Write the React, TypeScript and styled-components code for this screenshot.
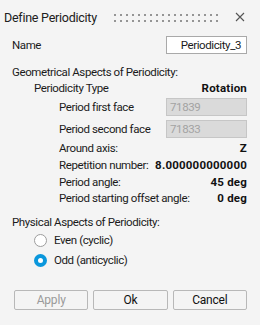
import React from 'react';
import styled, { createGlobalStyle } from 'styled-components';

const GlobalStyle = createGlobalStyle`
  html, body {
    margin: 0;
    padding: 0;
    background: #f4f4f4;
  }
`;

const Dialog = styled.div`
  width: 260px;
  height: 325px;
  background: #f4f4f4;
  font-family: Roboto, "Liberation Sans", Arial, sans-serif;
  font-size: 11.5px;
  letter-spacing: -0.4px;
  color: #1b1b1b;
  display: flex;
  flex-direction: column;
  padding: 0 13px 0 12px;
  box-sizing: border-box;
  overflow: hidden;
`;

const TitleBar = styled.div`
  height: 34px;
  margin-left: -8px;
  display: flex;
  align-items: center;
  gap: 15px;
`;

const Title = styled.div`
  font-size: 12.5px;
  letter-spacing: -0.25px;
  color: #202020;
  white-space: nowrap;
`;

const Grip = styled.div`
  flex: 1;
  height: 9px;
  background-image: radial-gradient(circle, #959595 0.9px, transparent 1.3px);
  background-size: 6px 6px;
  background-position: 0 -1px;
`;

const CloseButton = styled.button`
  width: 14px;
  height: 14px;
  padding: 0;
  border: none;
  background: none;
  display: flex;
  align-items: center;
  justify-content: center;
  cursor: pointer;
`;

const Row = styled.div<{ $h?: number; $mt?: number; $indent?: number }>`
  height: ${p => p.$h ?? 16}px;
  margin-top: ${p => p.$mt ?? 0}px;
  padding-left: ${p => p.$indent ?? 0}px;
  display: flex;
  align-items: center;
  justify-content: space-between;
  white-space: nowrap;
`;

const Label = styled.span`
  color: #1b1b1b;
`;

const Value = styled.span`
  font-weight: bold;
  letter-spacing: 0.2px;
  color: #111;
`;

const TextInput = styled.div<{ $disabled?: boolean }>`
  width: 81px;
  height: 18px;
  box-sizing: border-box;
  border: 1px solid ${p => (p.$disabled ? '#c6c6c6' : '#a9a9a9')};
  background: ${p => (p.$disabled ? '#dadada' : '#ffffff')};
  color: ${p => (p.$disabled ? '#a3a3a3' : '#1b1b1b')};
  display: flex;
  align-items: center;
  justify-content: ${p => (p.$disabled ? 'flex-start' : 'flex-end')};
  padding: 0 5px 0 3px;
`;

const RadioRow = styled.label`
  height: 20px;
  padding-left: 22px;
  display: flex;
  align-items: center;
  gap: 7px;
`;

const RadioDot = styled.span<{ $checked?: boolean }>`
  width: 13px;
  height: 13px;
  box-sizing: border-box;
  border-radius: 50%;
  background: #fff;
  border: ${p => (p.$checked ? '4px solid #0a97dc' : '1px solid #9d9d9d')};
`;

const ButtonBar = styled.div`
  margin-top: auto;
  margin-bottom: 15px;
  margin-left: 2px;
  display: flex;
  gap: 5px;
`;

const Button = styled.button<{ $disabled?: boolean }>`
  width: 75px;
  height: 20px;
  box-sizing: border-box;
  border: 1px solid #b8b8b8;
  border-radius: 2px;
  background: #f4f4f4;
  font-family: inherit;
  font-size: 12px;
  letter-spacing: -0.2px;
  color: ${p => (p.$disabled ? '#9a9a9a' : '#111')};
  padding: 0;
`;

export default function App() {
  return (
    <Dialog>
      <GlobalStyle />
      <TitleBar>
        <Title>Define Periodicity</Title>
        <Grip />
        <CloseButton aria-label="Close">
          <svg width="10" height="10" viewBox="0 0 10 10">
            <path d="M1 1 L9 9 M9 1 L1 9" stroke="#555" strokeWidth="1.1" />
          </svg>
        </CloseButton>
      </TitleBar>

      <Row $h={18} $mt={2}>
        <Label>Name</Label>
        <TextInput>Periodicity_3</TextInput>
      </Row>

      <Row $mt={10}>
        <Label>Geometrical Aspects of Periodicity:</Label>
      </Row>
      <Row $indent={22}>
        <Label>Periodicity Type</Label>
        <Value>Rotation</Value>
      </Row>
      <Row $h={18} $mt={2} $indent={47}>
        <Label>Period first face</Label>
        <TextInput $disabled>71839</TextInput>
      </Row>
      <Row $h={18} $mt={4} $indent={47}>
        <Label>Period second face</Label>
        <TextInput $disabled>71833</TextInput>
      </Row>
      <Row $mt={2} $indent={47}>
        <Label>Around axis:</Label>
        <Value>Z</Value>
      </Row>
      <Row $h={17} $indent={47}>
        <Label>Repetition number:</Label>
        <Value>8.000000000000</Value>
      </Row>
      <Row $h={17} $indent={47}>
        <Label>Period angle:</Label>
        <Value>45 deg</Value>
      </Row>
      <Row $indent={47}>
        <Label>Period starting offset angle:</Label>
        <Value>0 deg</Value>
      </Row>

      <Row $mt={8}>
        <Label>Physical Aspects of Periodicity:</Label>
      </Row>
      <RadioRow>
        <RadioDot />
        <Label>Even (cyclic)</Label>
      </RadioRow>
      <RadioRow>
        <RadioDot $checked />
        <Label>Odd (anticyclic)</Label>
      </RadioRow>

      <ButtonBar>
        <Button $disabled>Apply</Button>
        <Button>Ok</Button>
        <Button>Cancel</Button>
      </ButtonBar>
    </Dialog>
  );
}
